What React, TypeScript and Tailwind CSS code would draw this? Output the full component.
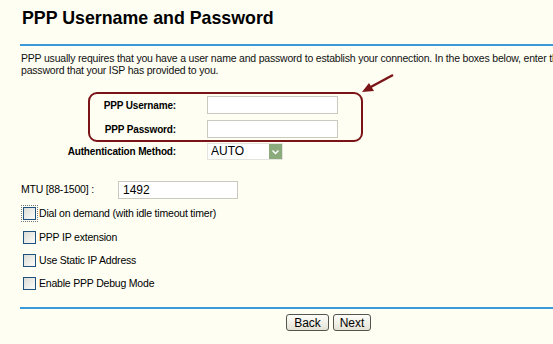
import React from 'react';

const Checkbox: React.FC<{ focused?: boolean }> = ({ focused }) => (
  <span
    className={`flex items-center justify-center w-[17px] h-[17px] ${
      focused ? 'border border-dotted border-[#777]' : ''
    }`}
  >
    <span className="block w-[13px] h-[13px] border border-[#1c5180] bg-gradient-to-br from-[#dcdcd7] to-[#fbfbf9]" />
  </span>
);

const TextBox: React.FC<{ width: string; value?: string }> = ({ width, value }) => (
  <div
    className={`${width} h-[18px] bg-white border border-[#c9c9c0] text-[12px] leading-[16px] pl-[4px] text-black`}
  >
    {value}
  </div>
);

const options = [
  'Dial on demand (with idle timeout timer)',
  'PPP IP extension',
  'Use Static IP Address',
  'Enable PPP Debug Mode',
];

export default function App() {
  return (
    <div
      className="relative w-[553px] h-[344px] overflow-hidden bg-[#fefef3] text-black"
      style={{ fontFamily: '"Liberation Sans", Arial, sans-serif' }}
    >
      <h1 className="pl-[22px] pt-[7px] text-[17.8px] leading-[22px] font-bold">PPP Username and Password</h1>

      <div className="ml-[20px] mt-[15px] h-[2px] bg-[#3a9ad9]" />

      <p className="pl-[21px] mt-[6px] text-[10.5px] tracking-[-0.2px] leading-[12px] whitespace-nowrap text-[#111]">
        PPP usually requires that you have a user name and password to establish your connection. In the boxes
        below, enter the user name and
        <br />
        password that your ISP has provided to you.
      </p>

      {/* credentials, highlighted */}
      <div className="ml-[88px] mt-[16px] w-[275px] h-[50px] border-2 border-[#7b1416] rounded-[9px] flex flex-col justify-center gap-[6px]">
        <div className="flex items-center">
          <span className="w-[86px] text-right text-[10px] tracking-[-0.15px] font-bold">PPP Username:</span>
          <span className="ml-[31px]">
            <TextBox width="w-[131px]" />
          </span>
        </div>
        <div className="flex items-center">
          <span className="w-[86px] text-right text-[10px] tracking-[-0.15px] font-bold">PPP Password:</span>
          <span className="ml-[31px]">
            <TextBox width="w-[131px]" />
          </span>
        </div>
      </div>

      <div className="flex items-center mt-[1px]">
        <span className="w-[176px] text-right text-[10px] tracking-[-0.15px] font-bold">Authentication Method:</span>
        <div className="ml-[31px] w-[76px] h-[17px] bg-white border border-[#e4e4de] flex items-center">
          <span className="flex-1 pl-[3px] text-[12px] leading-[15px]">AUTO</span>
          <span className="w-[13px] h-[15px] bg-[#8cab7d] flex items-center justify-center">
            <svg width="9" height="6" viewBox="0 0 9 6">
              <path d="M1.5 1.5 L4.5 4.5 L7.5 1.5" fill="none" stroke="#fff" strokeWidth="1.5" />
            </svg>
          </span>
        </div>
      </div>

      <div className="flex items-center pl-[21px] mt-[21px]">
        <span className="w-[97px] text-[10.5px] tracking-[-0.2px]">MTU [88-1500] :</span>
        <TextBox width="w-[120px]" value="1492" />
      </div>

      <div className="pl-[21px] mt-[6px] flex flex-col gap-[6px]">
        {options.map((label, i) => (
          <label
            key={label}
            className={`flex items-center gap-[1px] text-[10.5px] tracking-[-0.2px] ${i === 1 ? 'mt-[1px]' : ''}`}
          >
            <Checkbox focused={i === 0} />
            <span>{label}</span>
          </label>
        ))}
      </div>

      <div className="ml-[20px] mt-[15px] h-[2px] bg-[#3a9ad9]" />

      <div className="flex justify-center gap-[4px] mt-[5px] pl-[104px]">
        <button className="w-[43px] h-[17px] text-[12px] leading-[14px] rounded-[3px] border border-[#55554f] bg-gradient-to-b from-[#fdfdfa] to-[#e5e3d6]">
          Back
        </button>
        <button className="w-[38px] h-[17px] text-[12px] leading-[14px] rounded-[3px] border border-[#55554f] bg-gradient-to-b from-[#fdfdfa] to-[#e5e3d6]">
          Next
        </button>
      </div>

      {/* annotation arrow */}
      <svg className="absolute left-[355px] top-[69px]" width="45" height="30" viewBox="0 0 45 30">
        <line x1="38" y1="6" x2="12" y2="20" stroke="#7b1416" strokeWidth="2.5" />
        <polygon points="7,23 14,14 19,22" fill="#7b1416" />
      </svg>
    </div>
  );
}
